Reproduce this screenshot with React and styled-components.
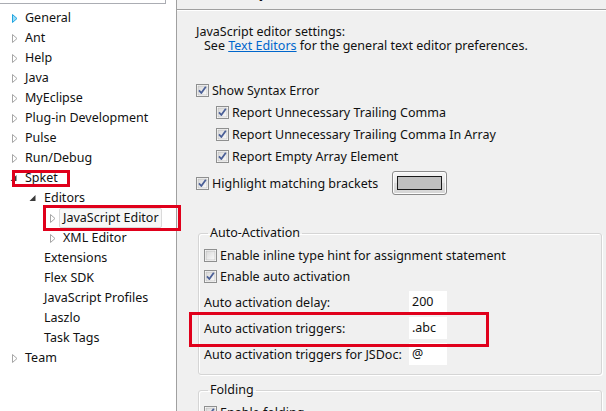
import React from 'react';
import styled, { createGlobalStyle } from 'styled-components';

const GlobalStyle = createGlobalStyle`
  html, body {
    margin: 0;
    padding: 0;
    background: #f0f0f0;
  }
  body {
    font-family: "Noto Sans", "Open Sans", sans-serif;
    font-size: 12.5px;
    color: #111;
  }
`;

const Window = styled.div`
  position: relative;
  width: 606px;
  height: 411px;
  display: flex;
  overflow: hidden;
  background: #f0f0f0;
`;

/* ---------- left tree ---------- */

const TreePanel = styled.div`
  width: 177px;
  flex-shrink: 0;
  box-sizing: border-box;
  background: #fff;
  border-right: 1px solid #a0a0a0;
`;

const FilterBox = styled.div`
  width: 166px;
  height: 4px;
  box-sizing: border-box;
  border-right: 1px solid #abadb3;
  border-bottom: 1px solid #abadb3;
`;

const TreeList = styled.ul`
  list-style: none;
  margin: 4px 0 0;
  padding: 0;
`;

const TreeRow = styled.li`
  height: 20px;
  display: flex;
  align-items: center;
  padding-left: ${p => 8 + p.$level * 19}px;
  white-space: nowrap;
`;

const ArrowSlot = styled.span`
  width: 17px;
  height: 20px;
  flex-shrink: 0;
  display: flex;
  align-items: center;
  padding-left: ${p => (p.$open ? 2 : 4)}px;
  box-sizing: border-box;
`;

const TreeLabel = styled.span`
  line-height: 18px;
  ${p => p.$selected && `
    margin-left: -4px;
    padding: 0 2px 0 3px;
    border: 1px solid #dadada;
    border-radius: 2px;
    background: #f7f7f7;
  `}
`;

function Arrow({ open, hot }) {
  if (open) {
    return (
      <svg width="7" height="8" viewBox="0 0 7 8">
        <polygon points="6.5,1 6.5,7 0.5,7" fill="#3a3a3a" />
      </svg>
    );
  }
  return (
    <svg width="6" height="9" viewBox="0 0 6 9">
      <polygon
        points="0.5,0.5 5,4.5 0.5,8.5"
        fill={hot ? '#9fdcf7' : '#fff'}
        stroke={hot ? '#1ea5e0' : '#a6a6a6'}
      />
    </svg>
  );
}

const tree = [
  { label: 'General', level: 0, arrow: 'hot' },
  { label: 'Ant', level: 0, arrow: 'closed' },
  { label: 'Help', level: 0, arrow: 'closed' },
  { label: 'Java', level: 0, arrow: 'closed' },
  { label: 'MyEclipse', level: 0, arrow: 'closed' },
  { label: 'Plug-in Development', level: 0, arrow: 'closed' },
  { label: 'Pulse', level: 0, arrow: 'closed' },
  { label: 'Run/Debug', level: 0, arrow: 'closed' },
  { label: 'Spket', level: 0, arrow: 'open' },
  { label: 'Editors', level: 1, arrow: 'open' },
  { label: 'JavaScript Editor', level: 2, arrow: 'closed', selected: true },
  { label: 'XML Editor', level: 2, arrow: 'closed' },
  { label: 'Extensions', level: 1 },
  { label: 'Flex SDK', level: 1 },
  { label: 'JavaScript Profiles', level: 1 },
  { label: 'Laszlo', level: 1 },
  { label: 'Task Tags', level: 1 },
  { label: 'Team', level: 0, arrow: 'closed' },
];

/* ---------- right page ---------- */

const Page = styled.div`
  flex: 1;
  min-width: 0;
  display: flex;
  flex-direction: column;
`;

const TitleBar = styled.div`
  flex-shrink: 0;
  height: 9px;
  overflow: hidden;
  border-bottom: 1px solid #a0a0a0;
  box-shadow: 0 1px 0 #fff;
  padding-left: 19px;
`;

const Title = styled.div`
  margin-top: -19px;
  font-size: 16px;
  line-height: 20px;
  font-weight: bold;
  white-space: nowrap;
`;

const Body = styled.div`
  flex-shrink: 0;
  padding: 15px 0 0 19px;
`;

const Intro = styled.div`
  line-height: 14px;
  white-space: nowrap;
`;

const IntroLine = styled.div`
  padding-left: ${p => p.$indent || 0}px;
`;

const Link = styled.span`
  color: #0066cc;
  text-decoration: underline;
`;

const Options = styled.div`
  margin-top: 26px;
  display: flex;
  flex-direction: column;
`;

const CheckRow = styled.label`
  height: ${p => p.$h || 22}px;
  margin-top: ${p => p.$top || 0}px;
  display: flex;
  align-items: center;
  gap: 3px;
  padding-left: ${p => p.$indent || 0}px;
  white-space: nowrap;
`;

const ColorButton = styled.div`
  margin-left: 11px;
  width: 55px;
  height: 24px;
  box-sizing: border-box;
  display: flex;
  align-items: center;
  justify-content: center;
  border: 1px solid #8a8a8a;
  border-radius: 3px;
  background: linear-gradient(#f6f6f6, #e8e8e8 50%, #dcdcdc 51%, #d6d6d6);
  box-shadow: inset 0 0 0 1px #fcfcfc;
`;

const Swatch = styled.div`
  width: 45px;
  height: 14px;
  box-sizing: border-box;
  border: 1px solid #1a1a1a;
  background: #c0c0c0;
`;

const Group = styled.fieldset`
  margin: ${p => p.$top || 0}px 0 0 2px;
  width: 404px;
  box-sizing: border-box;
  padding: 4px 5px 9px;
  border: 1px solid #d5d5d5;
  border-radius: 3px;
  box-shadow: inset 1px 1px 0 #fff, 1px 1px 0 #fff;
  min-width: 0;
`;

const Legend = styled.legend`
  padding: 0 2px;
  margin-left: 4px;
  line-height: 16px;
`;

const FieldGrid = styled.div`
  margin-top: 4px;
  display: grid;
  grid-template-columns: 205px 38px;
  row-gap: 4px;
  align-items: center;
`;

const FieldLabel = styled.span`
  white-space: nowrap;
`;

const Field = styled.div`
  height: 22px;
  box-sizing: border-box;
  padding-left: 3px;
  line-height: 22px;
  background: #fff;
`;

/* ---------- annotations ---------- */

const Mark = styled.div`
  position: absolute;
  left: ${p => p.$x}px;
  top: ${p => p.$y}px;
  width: ${p => p.$w}px;
  height: ${p => p.$h}px;
  box-sizing: border-box;
  border: 3px solid #e0001b;
  pointer-events: none;
`;

function Check({ on }) {
  return (
    <svg width="13" height="13" viewBox="0 0 13 13" style={{ flexShrink: 0 }}>
      <defs>
        <linearGradient id="cbfill" x1="0" y1="0" x2="1" y2="1">
          <stop offset="0" stopColor="#d8d8d8" />
          <stop offset="1" stopColor="#fbfbfb" />
        </linearGradient>
      </defs>
      <rect x="0.5" y="0.5" width="12" height="12" fill="#fff" stroke="#8e8f8f" />
      <rect x="2" y="2" width="9" height="9" fill="url(#cbfill)" stroke="#b4b4b4" strokeWidth="0.6" />
      {on && (
        <path
          d="M3 6.4 L5.3 9 L9.8 2.8"
          fill="none"
          stroke="#4a5f97"
          strokeWidth="1.8"
          strokeLinejoin="round"
        />
      )}
    </svg>
  );
}

export default function App() {
  return (
    <>
      <GlobalStyle />
      <Window>
        <TreePanel>
          <FilterBox />
          <TreeList>
            {tree.map(item => (
              <TreeRow key={item.label} $level={item.level}>
                <ArrowSlot $open={item.arrow === 'open'}>
                  {item.arrow && (
                    <Arrow open={item.arrow === 'open'} hot={item.arrow === 'hot'} />
                  )}
                </ArrowSlot>
                <TreeLabel $selected={item.selected}>{item.label}</TreeLabel>
              </TreeRow>
            ))}
          </TreeList>
        </TreePanel>

        <Page>
          <TitleBar>
            <Title>JavaScript Editor</Title>
          </TitleBar>
          <Body>
            <Intro>
              <IntroLine>JavaScript editor settings:</IntroLine>
              <IntroLine $indent={8}>
                See <Link>Text Editors</Link> for the general text editor preferences.
              </IntroLine>
            </Intro>

            <Options>
              <CheckRow><Check on />Show Syntax Error</CheckRow>
              <CheckRow $indent={20}><Check on />Report Unnecessary Trailing Comma</CheckRow>
              <CheckRow $indent={20}><Check on />Report Unnecessary Trailing Comma In Array</CheckRow>
              <CheckRow $indent={20}><Check on />Report Empty Array Element</CheckRow>
              <CheckRow $h={28} $top={2}>
                <Check on />Highlight matching brackets
                <ColorButton><Swatch /></ColorButton>
              </CheckRow>
            </Options>

            <Group $top={28}>
              <Legend>Auto-Activation</Legend>
              <CheckRow $h={21}><Check />Enable inline type hint for assignment statement</CheckRow>
              <CheckRow $h={21}><Check on />Enable auto activation</CheckRow>
              <FieldGrid>
                <FieldLabel>Auto activation delay:</FieldLabel>
                <Field>200</Field>
                <FieldLabel>Auto activation triggers:</FieldLabel>
                <Field>.abc</Field>
                <FieldLabel>Auto activation triggers for JSDoc:</FieldLabel>
                <Field>@</Field>
              </FieldGrid>
            </Group>

            <Group $top={7}>
              <Legend>Folding</Legend>
              <CheckRow $h={21}><Check on />Enable folding</CheckRow>
            </Group>
          </Body>
        </Page>

        <Mark $x={12} $y={170} $w={58} $h={17} />
        <Mark $x={43} $y={205} $w={138} $h={26} />
        <Mark $x={189} $y={312} $w={300} $h={35} />
      </Window>
    </>
  );
}
